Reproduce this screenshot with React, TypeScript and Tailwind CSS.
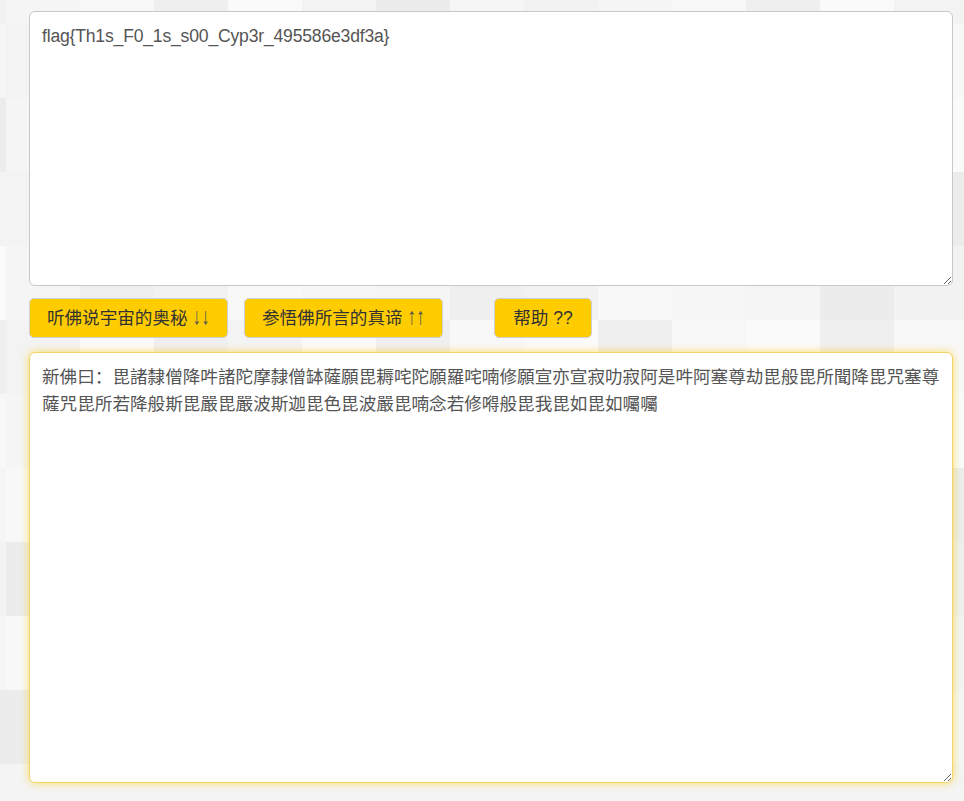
import React from "react";

const FONT = "font-['Liberation_Sans','Noto_Sans_CJK_SC',sans-serif]";

const TILE_COLORS = [
  "#f2f2f2",
  "#f5f5f5",
  "#f8f8f8",
  "#efefef",
  "#fafafa",
  "#f3f3f3",
  "#ececec",
  "#f6f6f6",
];

// background mosaic, just a drawing behind everything
function Mosaic() {
  const cols = 14;
  const rows = 11;
  const size = 74;
  const tiles: { x: number; y: number; c: string }[] = [];
  for (let r = 0; r < rows; r++) {
    for (let c = 0; c < cols; c++) {
      const h = (r * 31 + c * 17 + ((r * c) % 7) * 5) % TILE_COLORS.length;
      tiles.push({ x: c * size - 68, y: r * size - 50, c: TILE_COLORS[h] });
    }
  }
  return (
    <svg
      className="absolute inset-0 w-full h-full"
      width="964"
      height="801"
      aria-hidden="true"
    >
      {tiles.map((t, i) => (
        <rect key={i} x={t.x} y={t.y} width={74} height={74} fill={t.c} />
      ))}
    </svg>
  );
}

const flag = "flag{Th1s_F0_1s_s00_Cyp3r_495586e3df3a}";
const cipher =
  "新佛曰：毘諸隸僧降吽諸陀摩隸僧缽薩願毘耨咤陀願羅咤喃修願宣亦宣寂叻寂阿是吽阿塞尊劫毘般毘所聞降毘咒塞尊薩咒毘所若降般斯毘嚴毘嚴波斯迦毘色毘波嚴毘喃念若修嘚般毘我毘如毘如囑囑";

function Arrows({ children }: { children: React.ReactNode }) {
  return (
    <span className="inline-block scale-y-[1.35] origin-[50%_70%] text-[#555]">
      {children}
    </span>
  );
}

export default function App() {
  const btn = `h-[40px] bg-[#ffcc00] border border-[#cfcfcf] rounded-[5px] text-[17.6px] text-[#333] ${FONT}`;

  return (
    <div className={`relative h-[801px] overflow-hidden bg-[#f4f4f4] ${FONT}`}>
      <Mosaic />

      <div className="relative flex flex-col pt-[11px] pl-[29px]">
        {/* plain text box */}
        <textarea
          defaultValue={flag}
          className={`w-[924px] h-[275px] bg-white border border-[#c8c8c8] rounded-[6px] px-[12px] py-[11px] text-[17.6px] leading-[27px] tracking-[-0.2px] text-[#555] outline-none ${FONT}`}
        />

        {/* buttons */}
        <div className="flex items-center mt-[12px] h-[40px]">
          <button className={`w-[199px] ${btn}`}>
            听佛说宇宙的奥秘 <Arrows>↓↓</Arrows>
          </button>
          <button className={`ml-[16px] w-[199px] ${btn}`}>
            参悟佛所言的真谛 <Arrows>↑↑</Arrows>
          </button>
          <button className={`ml-[51px] w-[98px] ${btn}`}>帮助 ??</button>
        </div>

        {/* cipher box, focused look */}
        <textarea
          defaultValue={cipher}
          className={`mt-[14px] w-[924px] h-[431px] bg-white border border-[#f3d467] rounded-[6px] px-[12px] py-[11px] text-[17.6px] leading-[27px] text-[#555] outline-none shadow-[0_0_8px_rgba(255,204,0,0.6)] ${FONT}`}
        />
      </div>
    </div>
  );
}
